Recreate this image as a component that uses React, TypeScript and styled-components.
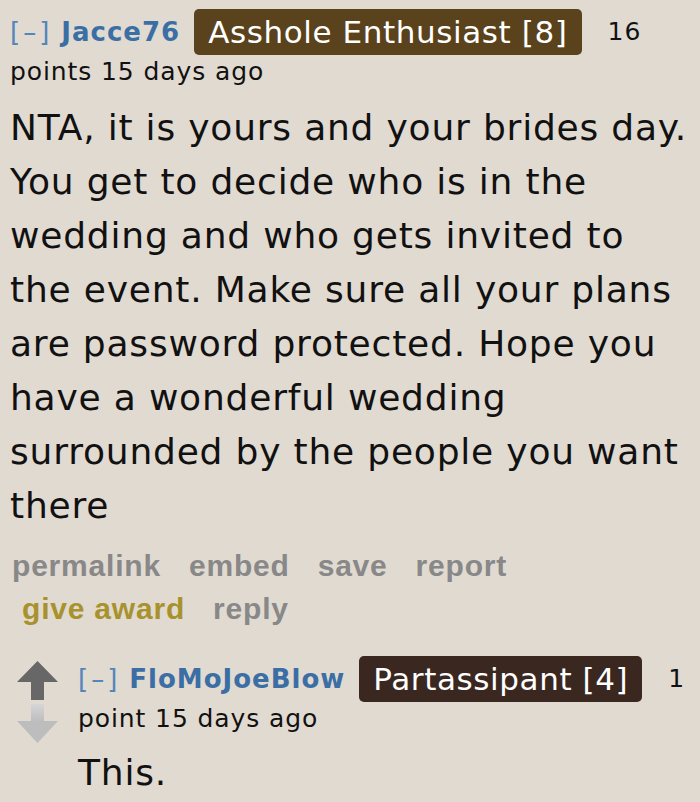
import styled, { createGlobalStyle } from 'styled-components'

const Global = createGlobalStyle`
  html, body {
    margin: 0;
    padding: 0;
    background: #e1dad1;
  }
  body {
    font-family: 'DejaVu Sans', Verdana, sans-serif;
    color: #111;
  }
`

const Page = styled.div`
  width: 700px;
  height: 802px;
  overflow: hidden;
  padding: 9px 0 0 10px;
  box-sizing: border-box;
`

const Head = styled.div`
  display: flex;
  align-items: center;
  gap: 14px;
  font-size: 26px;
  letter-spacing: 1px;
  line-height: 46px;
  height: 46px;
`

const Toggle = styled.span`
  color: #5485bb;
  font-weight: 400;
  letter-spacing: 3px;
  margin-right: 9px;
`

const Author = styled.span`
  color: #3b6ea5;
  font-weight: 700;
`

const Flair = styled.span<{ $bg: string }>`
  background: ${(p) => p.$bg};
  color: #fff;
  font-size: 31px;
  letter-spacing: 0.6px;
  line-height: 46px;
  padding: 0 14px;
  border-radius: 5px;
`

const Score = styled.span`
  font-size: 25px;
  margin-left: 12px;
`

const Meta = styled.div`
  font-size: 25px;
  letter-spacing: 0.9px;
  line-height: 34px;
`

const Body = styled.p`
  margin: 12px 0 0;
  font-size: 36px;
  letter-spacing: 0.8px;
  line-height: 54px;
  width: 684px;
`

const Buttons = styled.ul`
  list-style: none;
  margin: 11px 0 0;
  padding: 0 0 0 2px;
  display: flex;
  flex-wrap: wrap;
  column-gap: 28px;
  row-gap: 0;
  width: 560px;
  font-family: 'Liberation Sans', Arial, sans-serif;
  font-weight: 700;
  font-size: 30px;
  letter-spacing: 0.8px;
  line-height: 43px;
`

const Btn = styled.li<{ $gold?: boolean }>`
  color: ${(p) => (p.$gold ? '#a8922e' : '#888')};
  &:nth-child(5) {
    margin-left: 10px;
  }
`

const Child = styled.div`
  display: flex;
  margin-top: 26px;
  gap: 20px;
  padding-left: 7px;
`

const Votes = styled.div`
  display: flex;
  flex-direction: column;
  gap: 4px;
  padding-top: 5px;
`

const ChildBody = styled.div`
  display: flex;
  flex-direction: column;
`

const ChildText = styled.p`
  margin: 12px 0 0;
  font-size: 36px;
  letter-spacing: 0.8px;
  line-height: 50px;
`

const Up = () => (
  <svg width="41" height="39" viewBox="0 0 41 39">
    <polygon points="20.5,0 41,21 27,21 27,39 14,39 14,21 0,21" fill="#676767" />
  </svg>
)

const Down = () => (
  <svg width="41" height="39" viewBox="0 0 41 39">
    <defs>
      <linearGradient id="dg" x1="0" y1="0" x2="0" y2="1">
        <stop offset="0" stopColor="#d6d6d6" />
        <stop offset="0.45" stopColor="#bdbdbd" />
      </linearGradient>
    </defs>
    <polygon points="14,0 27,0 27,17 41,17 20.5,39 0,17 14,17" fill="url(#dg)" />
  </svg>
)

export default function App() {
  return (
    <>
      <Global />
      <Page>
        <Head>
          <span>
            <Toggle>[–]</Toggle>
            <Author>Jacce76</Author>
          </span>
          <Flair $bg="#5a421d">Asshole Enthusiast [8]</Flair>
          <Score>16</Score>
        </Head>
        <Meta>points 15 days ago</Meta>
        <Body>
          NTA, it is yours and your brides day. You get to decide who is in the wedding and who
          gets invited to the event. Make sure all your plans are password protected. Hope you
          have a wonderful wedding surrounded by the people you want there
        </Body>
        <Buttons>
          <Btn>permalink</Btn>
          <Btn>embed</Btn>
          <Btn>save</Btn>
          <Btn>report</Btn>
          <Btn $gold>give award</Btn>
          <Btn>reply</Btn>
        </Buttons>
        <Child>
          <Votes>
            <Up />
            <Down />
          </Votes>
          <ChildBody>
            <Head>
              <span>
                <Toggle>[–]</Toggle>
                <Author>FloMoJoeBlow</Author>
              </span>
              <Flair $bg="#3a2820">Partassipant [4]</Flair>
              <Score>1</Score>
            </Head>
            <Meta>point 15 days ago</Meta>
            <ChildText>This.</ChildText>
          </ChildBody>
        </Child>
      </Page>
    </>
  )
}
